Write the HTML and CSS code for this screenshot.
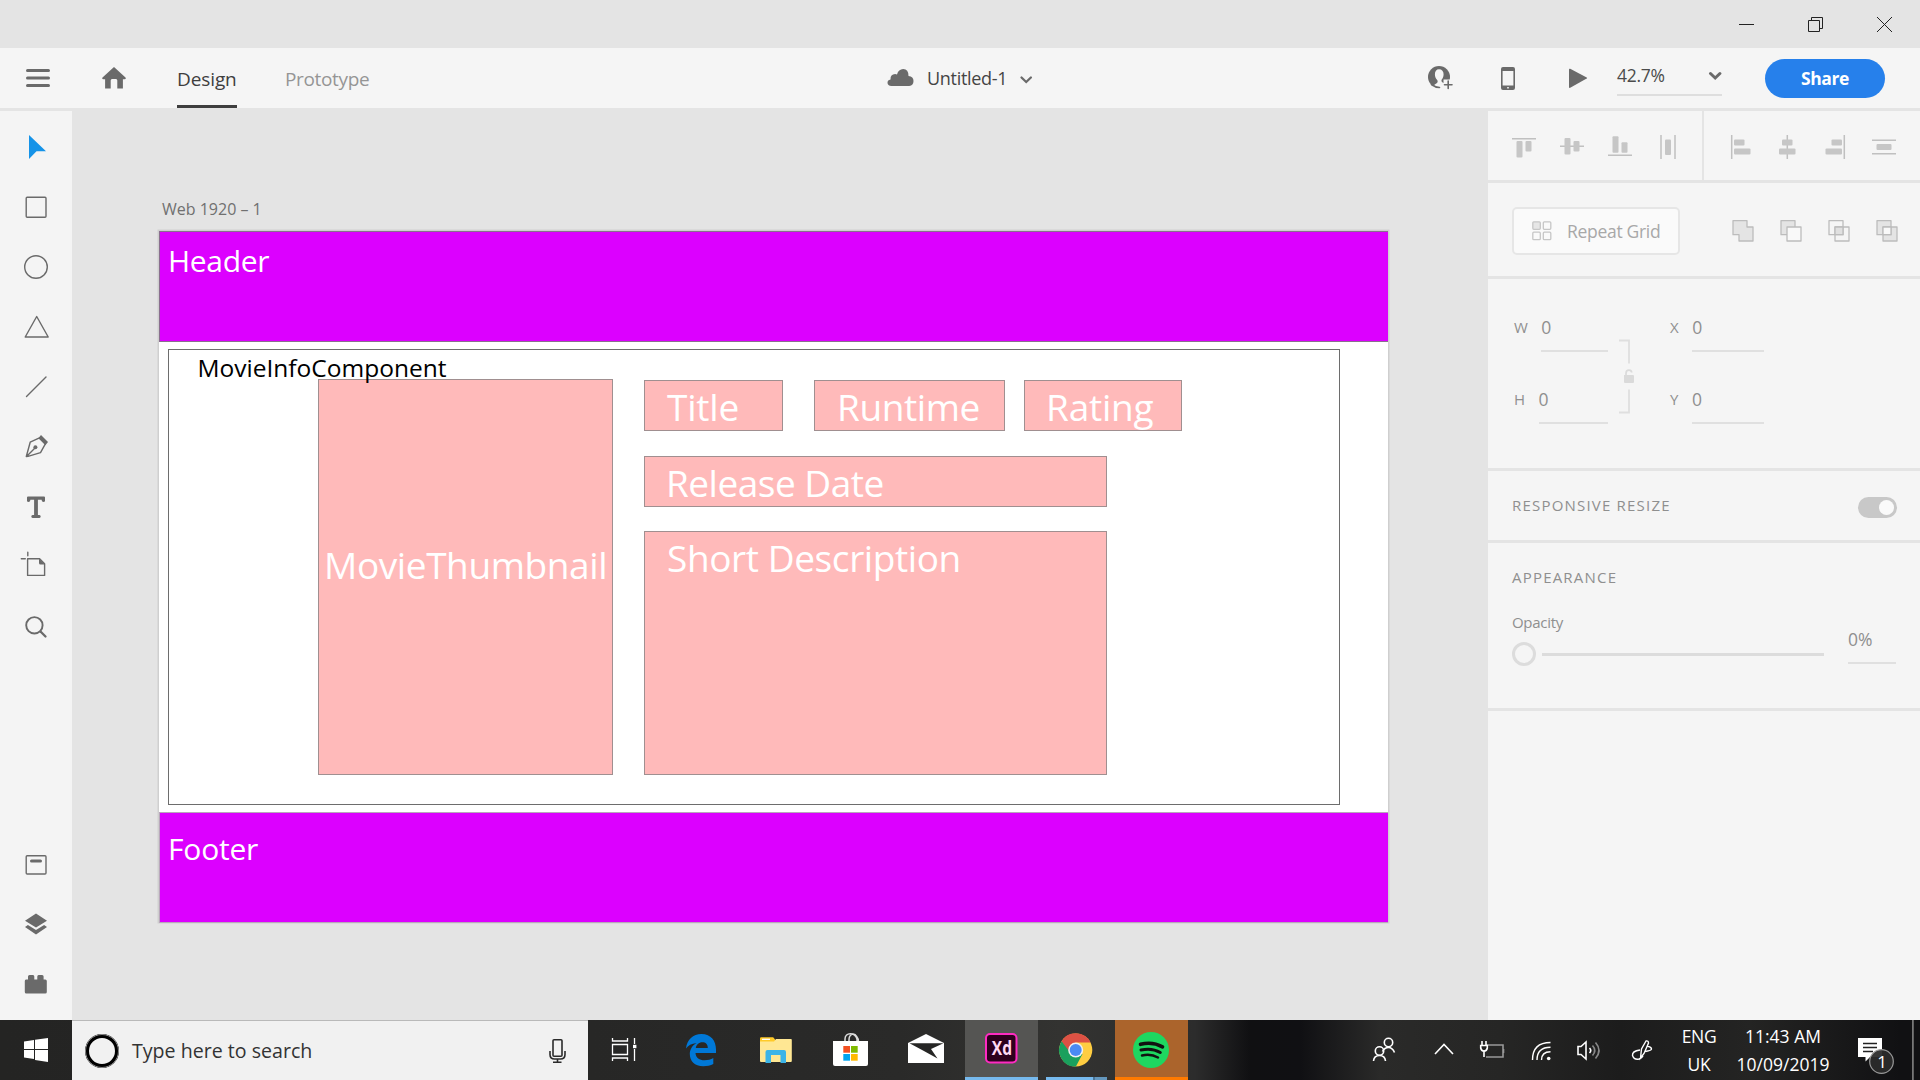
FILE: index.html
```html
<!DOCTYPE html>
<html lang="en">
<head>
<meta charset="utf-8">
<title>Untitled-1</title>
<link rel="stylesheet" href="styles.css">
</head>
<body>
<div class="app">
  <div class="titlebar">
    <svg class="win" viewBox="1712 0 69 48"><path d="M1739 24.500h15"/></svg>
    <svg class="win" viewBox="1781 0 69 48"><path d="M1808.500 20.500h11v11h-11zM1811.500 20v-2.500h11v11h-3"/></svg>
    <svg class="win" viewBox="1850 0 70 48"><path d="M1877 17l15 15M1892 17l-15 15"/></svg>
  </div>

  <header class="topbar">
    <div class="top-left">
      <svg class="ic menu" viewBox="26 48 24 60"><path class="s3" d="M27.500 70.500h21M27.500 78h21M27.500 85.500h21"/></svg>
      <svg class="ic home" viewBox="102 48 24 60"><path class="f" d="M114 67l11.500 10.600q.9 1.600-1 1.600h-1.600v9.300h-5.600v-8q0-1.500-1.300-1.500h-4q-1.300 0-1.300 1.500v8h-5.600v-9.300h-1.600q-1.900 0-1-1.600z"/></svg>
      <nav class="tabs">
        <span class="tab active">Design</span>
        <span class="tab proto">Prototype</span>
      </nav>
    </div>
    <div class="doc">
      <svg class="ic cloud" viewBox="887 48 28 60"><path class="f" d="M891.500 86q-4-.3-4-3.300 0-2.700 3-3.200-.2-5.300 4.600-5.400 1.100 0 1.900.4 1.500-5.300 6.200-5.400 5.300.3 5.300 6.800 5 .3 5 5.200 0 4.700-4.300 4.900z"/></svg>
      <span class="doc-name">Untitled-1</span>
      <svg class="ic chev" viewBox="1019 48 14 60"><path class="s25" d="M1021.500 77.500l4.700 4.500 4.700-4.500"/></svg>
    </div>
    <div class="top-right">
      <svg class="ic w26" viewBox="1427 48 26 60"><circle class="f" cx="1439" cy="77" r="11"/><path fill="#f5f5f5" d="M1439 69.200c3 0 4.600 2.100 4.600 5 0 2.500-1 4.300-2 5.500-.5 1.900.3 2.500 2.200 3.200l1.500.8v7h-6.300c-3 0-5.300-.8-7-2.700.8-2.800 4-4.200 5-5 1-.9.800-2.300 0-3.300-1.200-1.300-2.100-3.100-2.100-5.500 0-2.900 1.500-5 4.100-5z"/><path class="s2" d="M1431.500 84.500q4 3 8 3"/><path d="M1443.500 79.500h9.500v10h-9.500z" fill="#f5f5f5"/><path class="s2" d="M1444.500 84.700h7.500M1448.200 81v7.500"/></svg>
      <svg class="ic w26 phone" viewBox="1495 48 26 60"><path class="f" fill-rule="evenodd" d="M1503 67h10q2 0 2 2v19q0 2-2 2h-10q-2 0-2-2v-19q0-2 2-2zm-.4 4v14.500h10.800v-14.500zm4.600 16v1.500h1.600v-1.500z"/></svg>
      <svg class="ic w26 play" viewBox="1564 48 26 60"><path class="f" d="M1569 69.500q0-1.200 1.200-.7l16.500 8.600q1 .6 0 1.200l-16.500 9.200q-1.200.5-1.200-.7z"/></svg>
      <div class="zoom"><span class="pct">42.7%</span><svg class="chev-z" viewBox="1709 72 14 12"><path class="s3" d="M1711.500 75.500l4.700 4.500 4.700-4.500"/></svg></div>
      <div class="share">Share</div>
    </div>
  </header>

  <main class="work">
    <aside class="tools">
      <svg class="tool" viewBox="0 0 72 60"><path fill="#1593e8" d="M29 18l17 16.300h-9.500l-7.500 7.700z"/></svg>
      <svg class="tool" viewBox="0 0 72 60"><rect class="o" x="26.200" y="20.200" width="19.800" height="20" rx="1"/></svg>
      <svg class="tool" viewBox="0 0 72 60"><circle class="o" cx="36" cy="30" r="11.300"/></svg>
      <svg class="tool" viewBox="0 0 72 60"><path class="o" d="M36.700 19.500l11.500 20.500h-23z"/></svg>
      <svg class="tool" viewBox="0 0 72 60"><path class="o" d="M26.500 39.500l19.500-19.500"/></svg>
      <svg class="tool" viewBox="0 0 72 60"><path class="o" d="M26.300 39.500l3.900-14.300 9.800-4.500 5.500 6-5 9-12.500 3.600zM27 39l8-8"/><circle class="f" cx="35.400" cy="30.300" r="2"/><path class="f" d="M41 18l7 7-2.600 3.200-7-7z"/></svg>
      <svg class="tool" viewBox="0 0 72 60"><path class="f" d="M28 19.500h16q1 0 1 1v3.700q-1.500 1.600-3 0l-.4-1.500h-3.700v15.300h1.500q1.300.2 1.300 1.500t-1.300 1.400h-6.800q-1.300-.1-1.300-1.400t1.300-1.500h1.500v-15.300h-3.700l-.4 1.500q-1.500 1.600-3 0v-3.700q0-1 1-1z"/></svg>
      <svg class="tool" viewBox="0 0 72 60"><path class="o" d="M27.600 21.700h12l5 5v11.700h-17zM27.800 15.300v3.500M21.300 21.700h4"/><path class="f" d="M39 21.500l6 6h-4.500q-1.500 0-1.500-1.500z"/></svg>
      <svg class="tool" viewBox="0 0 72 60"><circle class="o2" cx="34.400" cy="28.300" r="8.200"/><path class="s25" d="M40.500 34.500l5 5"/></svg>
      <div class="spring"></div>
      <svg class="tool" viewBox="0 0 72 60"><rect class="o" x="26.200" y="21.800" width="19.800" height="18.200" rx="1"/><path class="s3" d="M31.500 27h9"/></svg>
      <svg class="tool" viewBox="0 0 72 60"><path class="f" d="M36 19.500l11 7.200-11 6.900-11-6.900zM25 33l2.900-2 8.100 4.900 8.100-4.900 2.900 2-11 7.500z"/></svg>
      <svg class="tool" viewBox="0 0 72 60"><path class="f" d="M26.500 25.500h1.500v-3q0-1.500 1.500-1.500h3.500q1.300 0 1.300 1.500v3h3v-3q0-1.500 1.300-1.500h3.500q1.500 0 1.500 1.500v3h1.700q1.500 0 1.500 1.500v11q0 1.500-1.500 1.500h-19q-1.500 0-1.500-1.500v-11q0-1.500 1.200-1.500z"/></svg>
    </aside>

    <section class="canvas">
      <div class="board-label">Web 1920 – 1</div>
      <div class="artboard">
        <div class="node band head"></div>
        <div class="node band foot"></div>
        <div class="node comp"></div>
        <div class="node pink thumb"></div>
        <div class="node pink title"></div>
        <div class="node pink runtime"></div>
        <div class="node pink rating"></div>
        <div class="node pink release"></div>
        <div class="node pink descr"></div>
        <span class="label l-head">Header</span>
        <span class="label l-foot">Footer</span>
        <span class="label l-comp">MovieInfoComponent</span>
        <span class="label big l-thumb">MovieThumbnail</span>
        <span class="label big l-title">Title</span>
        <span class="label big l-runtime">Runtime</span>
        <span class="label big l-rating">Rating</span>
        <span class="label big l-release">Release Date</span>
        <span class="label big l-descr">Short Description</span>
      </div>
    </section>

    <aside class="panel">
      <div class="row align">
        <svg class="al" viewBox="1488 111 214 69"><g class="g"><path class="l" d="M1512 138.700h24M1560 146.300h24M1608 155.200h24M1661 135v24M1675 135v24"/><rect x="1516.500" y="141" width="6" height="16.500" rx="1"/><rect x="1525.500" y="141" width="6" height="10.500" rx="1"/><rect x="1564.500" y="138" width="6" height="16.500" rx="1"/><rect x="1573.500" y="141" width="6" height="10.500" rx="1"/><rect x="1612.500" y="136.300" width="6" height="16.500" rx="1"/><rect x="1621.500" y="142.300" width="6" height="10.500" rx="1"/><rect x="1665" y="139.500" width="6" height="15.500" rx="1"/></g></svg>
        <svg class="al right" viewBox="1704 111 216 69"><g class="g"><path class="l" d="M1731.700 135v24M1787.300 135v24M1844.300 135v24M1872 140.300h24M1872 153.700h24"/><rect x="1734" y="139.500" width="10.500" height="6" rx="1"/><rect x="1734" y="148.500" width="16.500" height="6" rx="1"/><rect x="1782" y="139.500" width="10.500" height="6" rx="1"/><rect x="1779" y="148.500" width="16.500" height="6" rx="1"/><rect x="1831.500" y="139.500" width="10.500" height="6" rx="1"/><rect x="1825.500" y="148.500" width="16.500" height="6" rx="1"/><rect x="1876.500" y="144" width="15" height="6" rx="1"/></g></svg>
      </div>
      <div class="row repeat">
        <div class="rg">
          <svg class="rg-ic" viewBox="1532 221 20 20"><g class="go"><rect x="1532.800" y="221.800" width="7.500" height="7.500" rx="1" fill="#e6e6e6"/><rect x="1543.300" y="221.800" width="7.500" height="7.500" rx="1"/><rect x="1532.800" y="232.200" width="7.500" height="7.500" rx="1"/><rect x="1543.300" y="232.200" width="7.500" height="7.500" rx="1"/></g></svg>
          <span>Repeat Grid</span>
        </div>
        <svg class="bools" viewBox="1732 219 168 24"><g class="go2">
          <path fill="#e4e4e4" d="M1733 220.700h14v6.300h6v14h-14v-6.300h-6z"/>
          <path fill="#e4e4e4" d="M1781 220.700h14v14h-14z"/><path fill="#f9f9f9" d="M1787 227h14v14h-14z"/>
          <path d="M1829 220.700h14v14h-14zM1835 227h14v14h-14z"/><path fill="#e0e0e0" d="M1835 227h8v7.700h-8z"/>
          <path fill="#e4e4e4" d="M1877 220.700h14v14h-14zM1883 227h14v14h-14z"/><path fill="#f9f9f9" d="M1883 227h8v7.700h-8z"/>
        </g></svg>
      </div>
      <div class="row size">
        <div class="dims">
          <div class="dim"><span class="key">W</span><span class="val">0</span></div>
          <div class="dim"><span class="key">H</span><span class="val">0</span></div>
        </div>
        <svg class="link" viewBox="1618 338 18 78"><path class="k" d="M1619 340.500h10v23M1629 389.500v23h-10"/><path fill="#dadada" d="M1624 375h9q1 0 1 1v6q0 1-1 1h-8q-1 0-1-1z"/><path fill="none" stroke="#dadada" stroke-width="1.700" d="M1626 375.500v-2q0-3.300 3-3.300 2.500 0 2.700 2.300"/></svg>
        <div class="dims">
          <div class="dim"><span class="key">X</span><span class="val">0</span></div>
          <div class="dim"><span class="key">Y</span><span class="val">0</span></div>
        </div>
      </div>
      <div class="row resp"><span class="caps">RESPONSIVE RESIZE</span><span class="toggle"><span class="knob"></span></span></div>
      <div class="row appear">
        <div class="caps">APPEARANCE</div>
        <div class="op">
          <div class="op-l"><div class="op-name">Opacity</div><div class="slider"><span class="ring"></span><span class="track"></span></div></div>
          <div class="op-v">0%</div>
        </div>
      </div>
      <div class="row rest"></div>
    </aside>
  </main>

  <footer class="taskbar">
    <svg class="start" viewBox="0 1020 72 60"><path fill="#fff" d="M24 1041.500l10-1.500v9h-10zM35 1039.800l13-1.900v11.100h-13zM24 1050h10v9l-10-1.500zM35 1050h13v12l-13-1.900z"/></svg>
    <div class="search">
      <span class="cortana"></span><span>Type here to search</span>
      <svg class="mic" viewBox="548 1036 20 28"><g fill="none" stroke="#2b2b2b" stroke-width="1.600"><rect x="553" y="1038.800" width="9" height="16.500" rx="1"/><path d="M550 1050v3.500q0 4.500 4.500 4.500h6q4.500 0 4.500-4.500v-3.500M557.500 1058v3M553 1061.300h8.500"/></g></svg>
    </div>
    <div class="apps">
      <svg class="app-ic" viewBox="586 1020 75 60"><g fill="none" stroke="#fff" stroke-width="1.300"><path d="M612.500 1038v3h15v-3M612.500 1044.500h15v10h-15zM612.500 1061v-3h15v3M634.500 1038v6M634.500 1049v12"/></g><path fill="#fff" d="M633 1044.800h3.400v3.400h-3.400z"/></svg>
      <svg class="app-ic" viewBox="661 1020 75 60"><path fill="#0078d7" fill-rule="evenodd" d="M686 1048.500c1-9 7-14.500 15.500-14.500 9.500 0 14.500 7 14.500 15.500v3.500h-20.500c.3 5 4 7.300 9 7.300 3.500 0 6.300-1 8.800-2.300v6c-2.800 1.500-6.200 2.200-10 2.200-8.800 0-13.500-5-13.500-12.400 0-4.300 2.500-8.500 6.800-10.900-5.200.6-8.500 2.300-10.600 5.600zM695.800 1048h12c0-4-2.100-5.800-5.500-5.800-3.500 0-6 2.500-6.500 5.800z"/></svg>
      <svg class="app-ic" viewBox="736 1020 75 60"><path fill="#ffca28" d="M760 1038.500q0-1.200 1.200-1.200h12l2 2.500v3h-15.200z"/><path fill="#ffe793" d="M760 1041.500h14l2-2.500h15q.8 0 .8 1v21q0 1-1 1h-29.800q-1 0-1-1z"/><path fill="#fff" d="M762 1038.700h8v1.300h-8z"/><path fill="#3cb4e7" d="M765.500 1063v-11q0-2 2-2h16.500q2 0 2 2v11h-5.500v-8h-9.500v8z"/></svg>
      <svg class="app-ic" viewBox="811 1020 75 60"><path fill="none" stroke="#ddd" stroke-width="1.500" d="M845 1042v-3c0-7 10-7 12 0v3M849 1042v-2c0-6 5-8 8-3 1 1 1.500 3 1.500 5"/><path fill="#fff" d="M833 1041h35v23q0 2-2 2h-31q-2 0-2-2z"/><path fill="#f25022" d="M843.300 1046h6.700v6.700h-6.700z"/><path fill="#7fba00" d="M851 1046h6.700v6.700h-6.700z"/><path fill="#00a4ef" d="M843.300 1054h6.700v6.700h-6.700z"/><path fill="#ffb900" d="M851 1054h6.700v6.700h-6.700z"/></svg>
      <svg class="app-ic" viewBox="886 1020 75 60"><path fill="#fff" d="M908 1043l18-9 18 9v20h-36z"/><path fill="#262625" d="M909.500 1043.300h34l-12.500 5.700 6.500 9.500-14.500-8z"/></svg>
      <div class="tile xd"><svg viewBox="965 1020 73 57"><rect x="986" y="1034" width="30.500" height="28.500" rx="4" fill="#2e001e" stroke="#ff2bc2" stroke-width="2"/></svg><span class="xd-t">Xd</span></div>
      <div class="tile chrome"><svg viewBox="1038 1020 77 57"><circle cx="1075.700" cy="1050" r="16.600" fill="#ffcd41"/><path fill="#dd5144" d="M1061.300 1041.700a16.600 16.600 0 0 1 29.300.8h-14.900l-6 11.300z"/><path fill="#1aa05d" d="M1061.600 1041.200a16.600 16.600 0 0 0 14.300 25.400l6.600-12.600-12-1z"/><circle cx="1075.700" cy="1050" r="7.500" fill="#f1f1f1"/><circle cx="1075.700" cy="1050" r="6" fill="#4a8af4"/></svg></div>
      <div class="tile spot"><svg viewBox="1115 1020 73 57"><circle cx="1151" cy="1050" r="18" fill="#1ed760"/><g fill="none" stroke="#111" stroke-linecap="round"><path stroke-width="3.600" d="M1140.500 1044.300q12-3 22 2.500"/><path stroke-width="3" d="M1141 1050q11-2.500 19.300 2.500"/><path stroke-width="2.500" d="M1142 1055.500q9-2 16 2"/></g></svg></div>
    </div>
    <div class="tray">
      <svg class="tray-ic" viewBox="1360 1020 310 60"><g fill="none" stroke="#fff" stroke-width="1.600">
        <circle cx="1388.500" cy="1042.500" r="4.200"/><path d="M1382.500 1051.500q2-4 6-4t6 5"/><circle cx="1379.500" cy="1051" r="4.200"/><path d="M1373.500 1061q.5-5.500 6-5.500t6 5.500"/>
        <path d="M1435 1054l9-9.500 9 9.500"/>
        <path stroke="#999" d="M1486 1045h17v12h-17M1503.500 1049v4"/><path fill="#222221" d="M1480.700 1045.500h6.600v2.500q-.5 3-3.300 3t-3.300-3z"/><path d="M1482 1041v4M1486 1041v4M1484 1051v6"/>
        <g stroke-width="1.400"><path d="M1532.500 1060q0-17.500 18-17.500M1537 1060q0-12.800 13.500-12.800M1541.500 1060q0-8.300 9-8.300"/></g>
        <path d="M1578 1046.500h3l5-4.500v17l-5-4.500h-3zM1589.500 1048q2.500 2.500 0 5"/><path stroke="#888" d="M1592.500 1045.500q4.500 5 0 10M1595.500 1042.500q7 8 0 16"/>
        <g stroke-width="1.400"><path d="M1640.500 1058l1-9 4.500-8q2.500-.5 2.500 2l-4.500 10.500zM1640 1050q-8 1-7.500 5.500 1.500 4.500 6.500 3.500 3-1 4-3M1647 1046q4.500 1 4.500 3 0 1.500-6 2.500"/></g></g><circle cx="1548.700" cy="1058.500" r="1.800" fill="#fff"/></svg>
      <div class="lang"><span>ENG</span><span>UK</span></div>
      <div class="clock"><span>11:43 AM</span><span>10/09/2019</span></div>
      <div class="notif"><svg viewBox="1850 1020 70 60"><path fill="#fff" d="M1858 1038h24v19h-12l-4.500 4.500v-4.500h-7.500z"/><path stroke="#222" stroke-width="1.400" d="M1863 1043.500h14M1863 1047.500h14M1863 1051.500h10"/><circle cx="1881.500" cy="1061.500" r="11.800" fill="#2b2b2b" fill-opacity=".94" stroke="#9a9a9a" stroke-width="1.200"/><path fill="#777" d="M1912 1020h1.800v60h-1.800z"/></svg><span class="badge">1</span></div>
    </div>
  </footer>
</div>
</body>
</html>
```
FILE: styles.css
```css
* { box-sizing: border-box; }
body { margin: 0; background: #e4e4e4; font-family: "Open Sans", "Noto Sans", sans-serif; overflow: hidden; }
svg { display: block; flex: none; }
span { white-space: nowrap; }
.app { width: 1920px; height: 1080px; display: flex; flex-direction: column; }

/* window chrome */
.titlebar { height: 48px; display: flex; justify-content: flex-end; background: #e4e4e4; }
.win { height: 48px; fill: none; stroke: #222; stroke-width: 1; }

.topbar { height: 60px; background: #f5f5f5; display: flex; }
.ic { height: 60px; }
.f { fill: #6a6a6a; }
.s3, .s25, .s2 { fill: none; stroke: #6a6a6a; stroke-width: 3; stroke-linecap: round; }
.s25 { stroke-width: 2.300px; }
.s2 { stroke-width: 1.600px; }
.top-left, .doc, .top-right { display: flex; align-items: center; }
.top-left { width: 887px; }
.menu { margin-left: 26px; width: 24px; }
.home { margin-left: 52px; width: 24px; }
.tabs { display: flex; gap: 48px; margin-left: 51px; height: 60px; }
.tab { height: 60px; line-height: 62px; font-size: 19px; color: #959595; }
.tab.active { color: #3e3e3e; border-bottom: 3px solid #3e3e3e; width: 60px; letter-spacing: -.1px; }
.proto { letter-spacing: -.35px; }
.cloud { width: 28px; }
.doc-name { font-size: 18px; margin-left: 12px; line-height: 58px; width: 92px; color: #444; letter-spacing: -.3px; padding-bottom: 1px; }
.chev { width: 14px; }
.top-right { margin-left: auto; padding-right: 35px; }
.w26 { width: 26px; }
.phone { margin-left: 42px; }
.play { margin-left: 43px; }
.zoom { margin-left: 27px; width: 105px; height: 36px; margin-top: -1px; border-bottom: 2px solid #dedede; display: flex; justify-content: space-between; align-items: center; font-size: 17.500px; color: #4b4b4b; letter-spacing: -.3px; }
.pct { padding-bottom: 3px; }
.chev-z { width: 14px; height: 12px; margin-bottom: 1px; }
.share { margin-left: 43px; width: 120px; height: 39px; border-radius: 20px; background: #2680eb; color: #fff; font-weight: 700; font-size: 17.500px; line-height: 39px; text-align: center; letter-spacing: -.4px; }

.work { height: 912px; padding-top: 3px; display: flex; }
.tools { width: 72px; height: 909px; background: #f4f4f4; padding: 6px 0; display: flex; flex-direction: column; }
.tool { width: 72px; height: 60px; }
.spring { flex: 1; }
.o, .o2 { fill: none; stroke: #6a6a6a; stroke-width: 1.400px; stroke-linecap: round; stroke-linejoin: round; }
.o2 { stroke-width: 1.900px; }

/* design canvas */
.canvas { flex: 1; position: relative; }
.board-label { position: absolute; left: 90px; top: 86px; font-size: 16px; line-height: 24px; color: #707070; }
.artboard { position: absolute; left: 87px; top: 120px; width: 1229px; height: 691px; background: #fff; box-shadow: 0 0 0 1.500px #cfcfcf; }
.node, .label { position: absolute; }
.band { left: 0; width: 1229px; height: 111px; background: #dc00ff; border: 1px solid #8a6f8e; border-right: 0; }
.head { top: 0; }
.foot { top: 581px; border-color: #b9a7bb; }
.comp { left: 9px; top: 118px; width: 1172px; height: 456px; border: 1px solid #6d6d6d; }
.pink { background: #ffbaba; border: 1px solid #a08f90; }
.thumb { left: 159px; top: 148px; width: 295px; height: 396px; }
.title { left: 485px; top: 149px; width: 139px; height: 51px; }
.runtime { left: 655px; top: 149px; width: 191px; height: 51px; }
.rating { left: 865px; top: 149px; width: 158px; height: 51px; }
.release { left: 485px; top: 225px; width: 463px; height: 51px; }
.descr { left: 485px; top: 300px; width: 463px; height: 244px; }
.label { color: #fff; font-size: 30px; line-height: 40px; letter-spacing: -.3px; }
.label.big { font-size: 37px; line-height: 50px; letter-spacing: -.4px; }
.l-head { left: 9px; top: 10px; }
.label.l-foot { left: 9px; top: 598px; letter-spacing: -.2px; }
.label.l-comp { left: 38.500px; top: 117px; color: #000; font-size: 24.500px; letter-spacing: 0; }
.l-thumb { left: 165px; top: 309px; }
.label.l-title { left: 508px; top: 151px; letter-spacing: -.2px; }
.l-runtime { left: 678px; top: 151px; }
.label.l-rating { left: 887px; top: 151px; letter-spacing: -.2px; }
.label.l-release { left: 507px; top: 227px; letter-spacing: -.5px; }
.label.l-descr { left: 508px; top: 302px; letter-spacing: -.4px; }

/* property inspector */
.panel { width: 432px; display: flex; flex-direction: column; gap: 3px; color: #8f8f8f; }
.row { background: #f5f5f5; }
.align { height: 69px; display: flex; }
.al { width: 214px; height: 69px; }
.al.right { width: 218px; border-left: 2px solid #e4e4e4; }
.g { fill: #c6c6c6; }
.g .l { fill: none; stroke: #c0c0c0; stroke-width: 1.500px; }
.repeat { height: 93px; display: flex; align-items: center; padding: 0 20px 0 24px; justify-content: space-between; }
.rg { width: 168px; height: 48px; margin-top: 3px; border: 2px solid #e6e6e6; border-radius: 5px; background: #fafafa; display: flex; align-items: center; padding-left: 18px; font-size: 17.500px; letter-spacing: -.3px; color: #a8a8a8; }
.rg-ic { width: 20px; height: 20px; margin-right: 15px; }
.bools { width: 168px; height: 24px; margin-top: 3px; }
.go, .go2 { fill: none; stroke: #c6c6c6; stroke-width: 1.300px; }
.go2 { stroke: #bcbcbc; stroke-linejoin: round; }
.size { height: 189px; display: flex; padding: 34px 0 0 26px; }
.dims { width: 94px; }
.dim { height: 38px; margin-bottom: 34px; display: flex; gap: 13.500px; }
.key { font-size: 15px; line-height: 29px; }
.val { font-size: 17.500px; line-height: 29px; height: 39px; flex: 1; border-bottom: 2px solid #e0e0e0; }
.link { width: 18px; height: 78px; margin: 25px 34px 0 10px; }
.k { fill: none; stroke: #dfdfdf; stroke-width: 1.800px; }
.resp { height: 69px; padding: 0 23px 0 24px; display: flex; justify-content: space-between; align-items: center; }
.caps { font-size: 15px; letter-spacing: 1.200px; }
.resp .caps { padding-bottom: 2px; }
.toggle { width: 39px; height: 21px; border-radius: 11px; background: #c8c8c8; padding: 3px; display: flex; justify-content: flex-end; margin-top: 4px; }
.knob { width: 15px; height: 15px; border-radius: 50%; background: #fafafa; }
.appear { height: 165px; padding: 22px 24px 0; }
.appear .caps { line-height: 24px; }
.op { display: flex; justify-content: space-between; margin-top: 21px; }
.op-l { width: 312px; }
.op-name { font-size: 15px; line-height: 24px; letter-spacing: -.3px; }
.slider { display: flex; align-items: center; gap: 6px; margin-top: 8px; }
.ring { width: 24px; height: 24px; border: 3px solid #dcdcdc; border-radius: 50%; }
.track { flex: 1; height: 3px; background: #dcdcdc; }
.op-v { width: 48px; height: 42px; margin-top: 12px; border-bottom: 2px solid #e0e0e0; font-size: 17.500px; line-height: 35px; }
.rest { flex: 1; }

/* taskbar */
.taskbar { height: 60px; display: flex; background: linear-gradient(90deg, #242423 0, #272726 590px, #2a2a29 900px, #333331 1060px, #2c2c2c 1195px, #101012 1250px, #101013 1300px, #2a2a29 1380px, #262625 1500px, #1c1c1c 1620px, #242423 1750px, #111113 1900px); }
.start { width: 72px; height: 60px; }
.search { width: 516px; background: #f1f1f1; border-top: 1px solid #b9b9b9; display: flex; align-items: center; font-size: 19.600px; color: #333; padding-left: 13px; }
.cortana { width: 34px; height: 34px; border: 4px solid #000; outline: 1px solid #8a8a8a; outline-offset: -1px; border-radius: 50%; margin-right: 13px; }
.mic { width: 20px; height: 28px; margin: 0 20px 0 auto; }
.apps { display: flex; margin-left: -2px; }
.app-ic { width: 75px; height: 60px; }
.tile { height: 60px; position: relative; }
.tile svg { height: 57px; }
.xd { width: 73px; margin-left: 4px; background: #555553; border-bottom: 3px solid #76b9ed; }
.xd-t { position: absolute; left: 24px; top: 11px; font: 700 20px/34px "Open Sans", sans-serif; color: #ffd9f4; transform: scaleX(.78); }
.chrome { width: 77px; }
.chrome::after { content: ""; position: absolute; left: 8px; bottom: 0; width: 61px; height: 3px; background: linear-gradient(90deg, #76b9ed 47px, #4b7596 47px, #4b7596 49px, #6497bd 49px); }
.spot { width: 73px; background: #ab642c; border-bottom: 3px solid #ff7a00; }
.tray { flex: 1; margin-left: 172px; display: flex; color: #fff; font-size: 17.500px; }
.tray-ic { width: 310px; height: 60px; }
.lang, .clock { display: flex; flex-direction: column; align-items: center; line-height: 28px; padding-top: 2px; }
.lang { width: 58px; letter-spacing: -.3px; }
.clock { width: 110px; }
.notif { position: relative; width: 70px; margin-left: auto; }
.badge { position: absolute; left: 24px; top: 30px; width: 16px; text-align: center; font-size: 17px; line-height: 24px; }
```
